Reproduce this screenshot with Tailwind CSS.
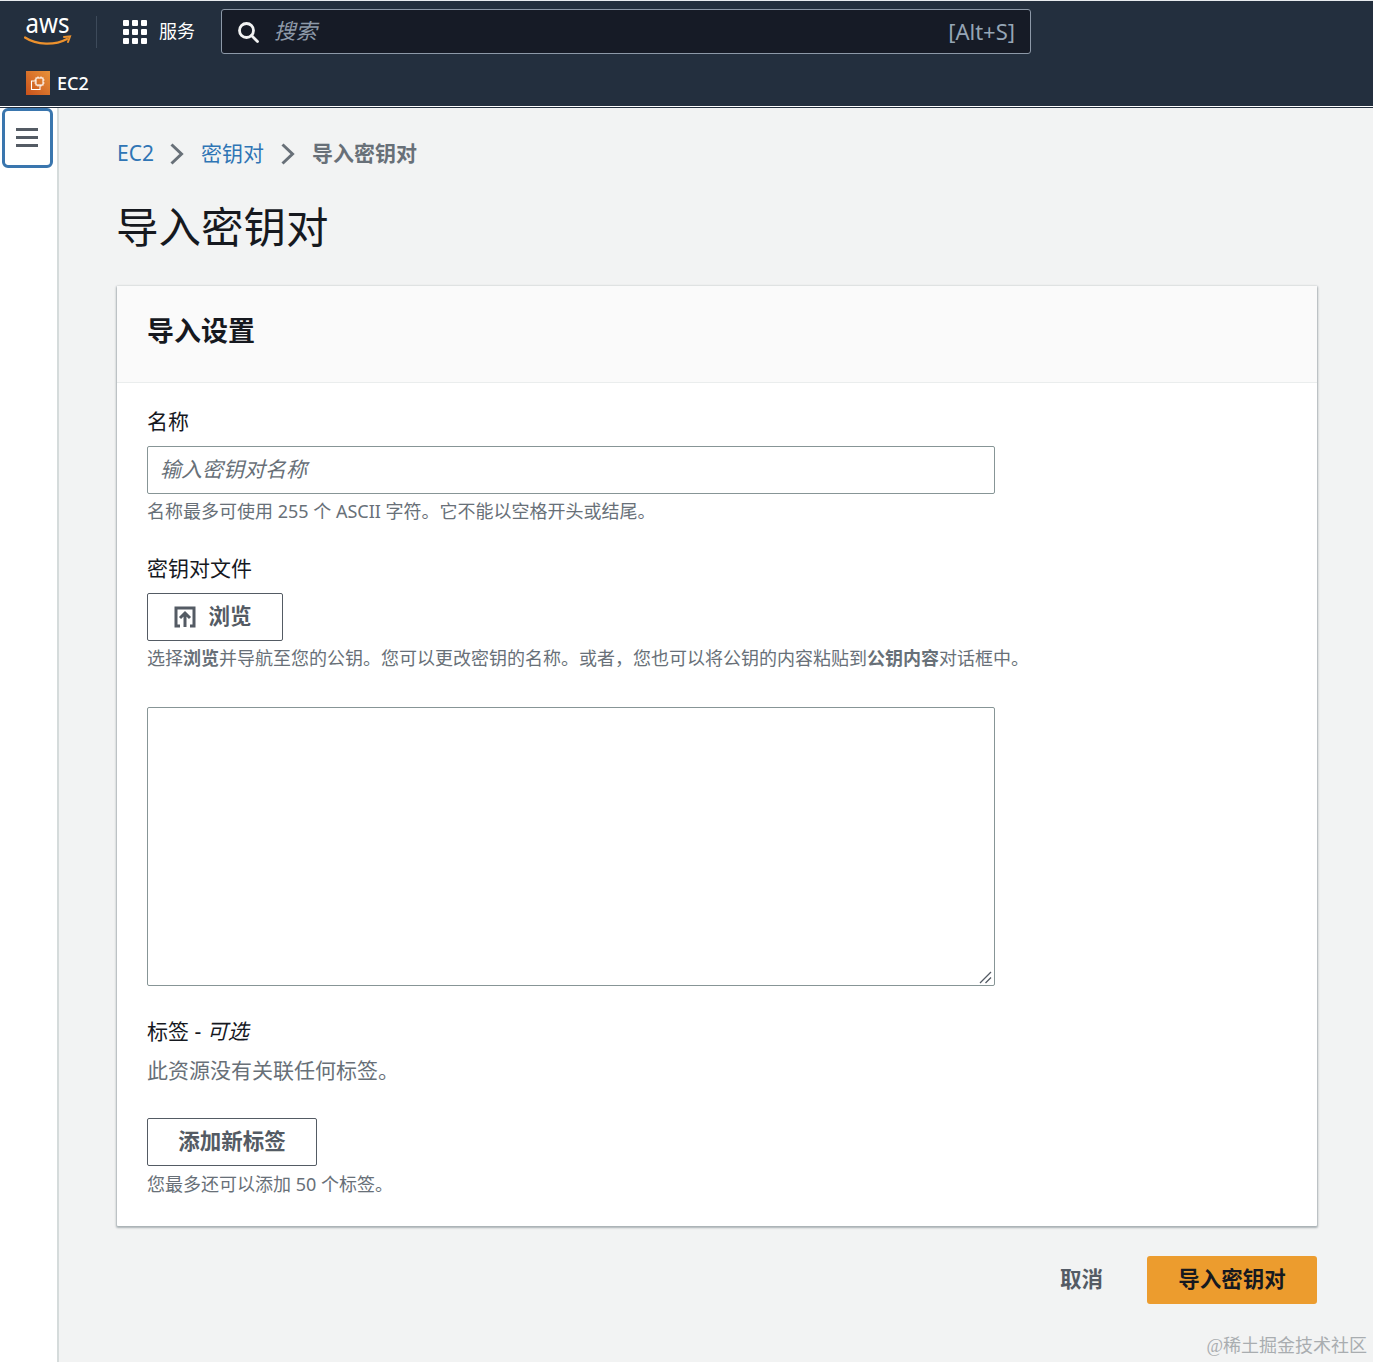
<!DOCTYPE html>
<html lang="zh-CN">
<head>
  <meta charset="UTF-8" />
  <title>导入密钥对</title>
  <script src="https://cdn.jsdelivr.net/npm/@tailwindcss/browser@4"></script>
</head>
<body class="bg-[#f2f3f3] text-[#16191f] font-['Noto_Sans','Noto_Sans_CJK_SC',sans-serif]">
  <div class="w-[1373px] h-[1362px] flex flex-col relative overflow-hidden">
    <!-- 顶部导航 -->
    <header class="h-[108px] shrink-0 bg-[#232f3e] border-t-[1px] border-t-[#e8ecef]">
      <div class="h-[61px] flex items-center">
        <div class="w-[97px] h-[32px] pl-[24px] border-r border-[#3d4a5a] flex items-center mr-[26px]">
          <svg class="shrink-0" width="58" height="54" viewBox="0 0 58 54">
            <text x="1.500" y="28" fill="#fff" font-size="27" textLength="44" lengthAdjust="spacingAndGlyphs" font-family="Noto Sans, sans-serif">aws</text>
            <path d="M1 32.500c12 8 30 8 42 1.500" fill="none" stroke="#ec912d" stroke-width="2.200" stroke-linecap="round"/>
            <path d="M40 32l6-.5-2 5.500" fill="none" stroke="#ec912d" stroke-width="2" stroke-linecap="round"/>
          </svg>
        </div>
        <div class="grid grid-cols-3 gap-[3px] w-[24px] h-[24px] mr-[12px]">
          <span class="bg-white rounded-[1px]"></span><span class="bg-white rounded-[1px]"></span><span class="bg-white rounded-[1px]"></span>
          <span class="bg-white rounded-[1px]"></span><span class="bg-white rounded-[1px]"></span><span class="bg-white rounded-[1px]"></span>
          <span class="bg-white rounded-[1px]"></span><span class="bg-white rounded-[1px]"></span><span class="bg-white rounded-[1px]"></span>
        </div>
        <span class="text-white text-[18px] w-[36px] whitespace-nowrap">服务</span>
        <div class="ml-[26px] w-[810px] h-[45px] bg-[#161b26] border border-[#8d99a8] rounded-[3px] flex items-center pl-[15px] pr-[15px]">
          <svg width="22" height="22" viewBox="0 0 22 22" fill="none" stroke="#f2f3f3" stroke-width="2.800">
            <circle cx="9.500" cy="9.500" r="7"/>
            <path d="M14.500 14.500l6 6" stroke-linecap="round"/>
          </svg>
          <span class="ml-[15px] text-[21.500px] italic text-[#8d99a8]">搜索</span>
          <span class="ml-auto text-[22px] text-[#95a5b5]">[Alt+S]</span>
        </div>
      </div>
      <div class="h-[44px] flex items-center pl-[26px] pb-[2px]">
        <div class="w-[24px] h-[24px] bg-gradient-to-tr from-[#c8511b] to-[#e8923a] flex items-center justify-center mr-[7px]">
          <svg width="18" height="18" viewBox="0 0 18 18" fill="none" stroke="#fff" stroke-width="1.100">
            <rect x="7" y="4" width="7" height="7"/>
            <path d="M9 4V2.500M12 4V2.500M9 12.500V11M12 12.500V11M5.500 6H7M5.500 9H7M14 6h1.500M14 9h1.500"/>
            <path d="M7 7H2.500v8.500H11V11"/>
          </svg>
        </div>
        <span class="text-white text-[18px] font-medium">EC2</span>
      </div>
      <div class="h-[1px] bg-white"></div>
      <div class="h-[1px] bg-[#232f3e]"></div>
    </header>

    <div class="flex flex-1 min-h-0">
      <!-- 侧边栏 -->
      <aside class="w-[59px] shrink-0 bg-white border-r-[2px] border-[#d5dbdb]">
        <button class="w-[51px] h-[60px] ml-[2px] bg-white border-[3px] border-[#3a76ae] rounded-[6px] flex items-center justify-center pb-[2px] pr-[2px]">
          <span class="flex flex-col gap-[5px] w-[22px]">
            <span class="h-[3px] bg-[#545b64]"></span>
            <span class="h-[3px] bg-[#545b64]"></span>
            <span class="h-[3px] bg-[#545b64]"></span>
          </span>
        </button>
      </aside>

      <main class="flex-1 pl-[58px] pr-[56px]">
        <nav class="flex items-center h-[30px] mt-[31px] text-[21px]">
          <a class="text-[#2f75b5] w-[36px] whitespace-nowrap">EC2</a>
          <svg class="ml-[16px] mr-[17px]" width="15" height="24" viewBox="0 0 15 24" fill="none" stroke="#687078" stroke-width="3"><path d="M2.500 2.500l10 9.500-10 9.500"/></svg>
          <a class="text-[#2f75b5] whitespace-nowrap">密钥对</a>
          <svg class="ml-[16px] mr-[17px]" width="15" height="24" viewBox="0 0 15 24" fill="none" stroke="#687078" stroke-width="3"><path d="M2.500 2.500l10 9.500-10 9.500"/></svg>
          <span class="text-[#687078] font-bold whitespace-nowrap">导入密钥对</span>
        </nav>

        <h1 class="text-[42.500px] leading-[60px] mt-[28px] -ml-[1px] font-normal">导入密钥对</h1>

        <section class="mt-[29px] w-[1200px] h-[940px] bg-white shadow-[0_1px_2px_1px_rgba(0,28,36,0.3)] rounded-[1px]">
          <div class="h-[97px] bg-[#fafafa] border-b border-[#eaeded] px-[30px] pb-[5px] flex items-center">
            <h2 class="text-[27px] font-bold">导入设置</h2>
          </div>
          <div class="px-[30px] pt-[23px]">
            <label class="block text-[21px] leading-[30px] text-[#16191f]">名称</label>
            <div class="mt-[10px] w-[848px] h-[48px] border border-[#879596] rounded-[2px] px-[12px] flex items-center text-[21px] italic text-[#687078]">输入密钥对名称</div>
            <p class="text-[18px] leading-[26px] mt-[4px] text-[#687078]">名称最多可使用 255 个 ASCII 字符。它不能以空格开头或结尾。</p>

            <label class="block text-[21px] leading-[30px] mt-[29px]">密钥对文件</label>
            <button class="mt-[10px] w-[136px] h-[48px] border border-[#545b64] rounded-[2px] flex items-center justify-center gap-[12px] pr-[4px] pb-[2px] text-[21.500px] font-bold text-[#545b64] bg-white">
              <svg class="mt-[2px]" width="22" height="22" viewBox="0 0 22 22" fill="none" stroke="#545b64" stroke-width="3">
                <path d="M6 20H2V2h18v18h-4"/>
                <path d="M11 21V8M6 12l5-5 5 5"/>
              </svg>
              浏览
            </button>
            <p class="text-[18px] leading-[26px] mt-[4px] text-[#687078] whitespace-nowrap">选择<b>浏览</b>并导航至您的公钥。您可以更改密钥的名称。或者，您也可以将公钥的内容粘贴到<b>公钥内容</b>对话框中。</p>

            <div class="relative mt-[36px] w-[848px] h-[279px] border border-[#879596] rounded-[2px]">
              <svg class="absolute right-[2px] bottom-[1px]" width="13" height="13" viewBox="0 0 13 13" stroke="#545b64" stroke-width="1.300"><path d="M1 12L12 1M6.500 12L12 6.500"/></svg>
            </div>

            <p class="text-[21px] leading-[30px] mt-[30px]">标签 - <i>可选</i></p>
            <p class="text-[21px] leading-[30px] mt-[9px] text-[#687078]">此资源没有关联任何标签。</p>
            <button class="mt-[33px] block w-[170px] h-[48px] border border-[#545b64] rounded-[2px] pb-[2px] text-[21.500px] font-bold text-[#545b64] bg-white">添加新标签</button>
            <p class="text-[18px] leading-[26px] mt-[5px] text-[#687078]">您最多还可以添加 50 个标签。</p>
          </div>
        </section>

        <div class="w-[1200px] mt-[30px] flex items-center justify-end">
          <button class="text-[21.500px] font-bold text-[#545b64] mr-[44px] pb-[2px]">取消</button>
          <button class="w-[170px] h-[48px] bg-[#ec9c2e] rounded-[3px] pb-[2px] text-[21.500px] font-bold text-[#16191f]">导入密钥对</button>
        </div>
      </main>
    </div>

    <span class="absolute right-[6px] bottom-[3px] text-[18px] leading-[26px] text-[#a9adb0] font-['Liberation_Serif','Noto_Sans_CJK_SC',serif]">@稀土掘金技术社区</span>
  </div>
</body>
</html>
